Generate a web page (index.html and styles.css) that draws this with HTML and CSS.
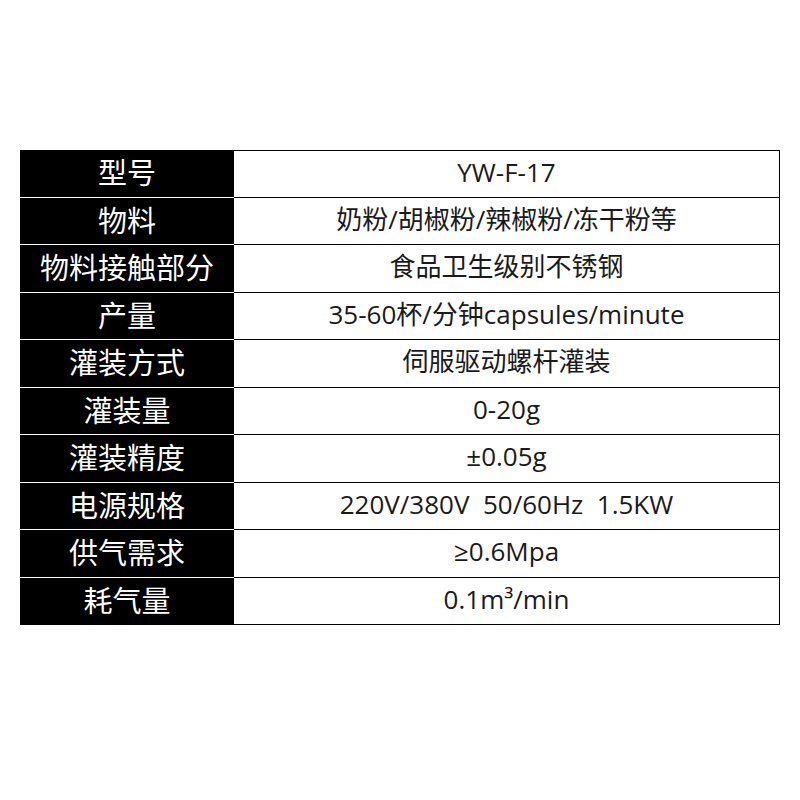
FILE: index.html
```html
<!DOCTYPE html>
<html lang="zh">
<head>
<meta charset="utf-8">
<link rel="stylesheet" href="styles.css">
</head>
<body>
<div class="spec">
  <div class="row"><div class="k">型号</div><div class="v">YW-F-17</div></div>
  <div class="row"><div class="k">物料</div><div class="v">奶粉/胡椒粉/辣椒粉/冻干粉等</div></div>
  <div class="row"><div class="k">物料接触部分</div><div class="v">食品卫生级别不锈钢</div></div>
  <div class="row"><div class="k">产量</div><div class="v">35-60杯/分钟capsules/minute</div></div>
  <div class="row"><div class="k">灌装方式</div><div class="v">伺服驱动螺杆灌装</div></div>
  <div class="row"><div class="k">灌装量</div><div class="v">0-20g</div></div>
  <div class="row"><div class="k">灌装精度</div><div class="v">±0.05g</div></div>
  <div class="row"><div class="k">电源规格</div><div class="v">220V/380V&nbsp;&nbsp;50/60Hz&nbsp;&nbsp;1.5KW</div></div>
  <div class="row"><div class="k">供气需求</div><div class="v">≥0.6Mpa</div></div>
  <div class="row"><div class="k">耗气量</div><div class="v">0.1m³/min</div></div>
</div>
</body>
</html>
```

FILE: styles.css
```css
html, body {
  margin: 0;
  padding: 0;
  background: #fff;
}
body {
  font-family: "Open Sans", "Noto Sans CJK SC", sans-serif;
}
.spec {
  margin: 150px 0 0 20px;
  width: 760px;
  display: flex;
  flex-direction: column;
}
.row {
  display: grid;
  grid-template-columns: 214px 546px;
  height: 47.5px;
}
.k {
  background: #000;
  color: #fff;
  font-family: "Noto Sans CJK SC", sans-serif;
  font-size: 29px;
  line-height: 1;
  display: flex;
  align-items: center;
  justify-content: center;
  padding-bottom: 3px;
  border-bottom: 1px solid #fff;
  box-sizing: border-box;
}
.row:last-child .k {
  border-bottom: none;
}
.v {
  border-bottom: 1px solid #000;
  border-right: 1px solid #000;
  box-sizing: border-box;
  color: #1a1a1a;
  font-size: 26px;
  line-height: 1;
  display: flex;
  align-items: center;
  justify-content: center;
  padding-bottom: 4px;
  font-family: "Open Sans", "Noto Sans CJK SC", sans-serif;
}
.row:first-child .v {
  border-top: 1px solid #000;
}
```
